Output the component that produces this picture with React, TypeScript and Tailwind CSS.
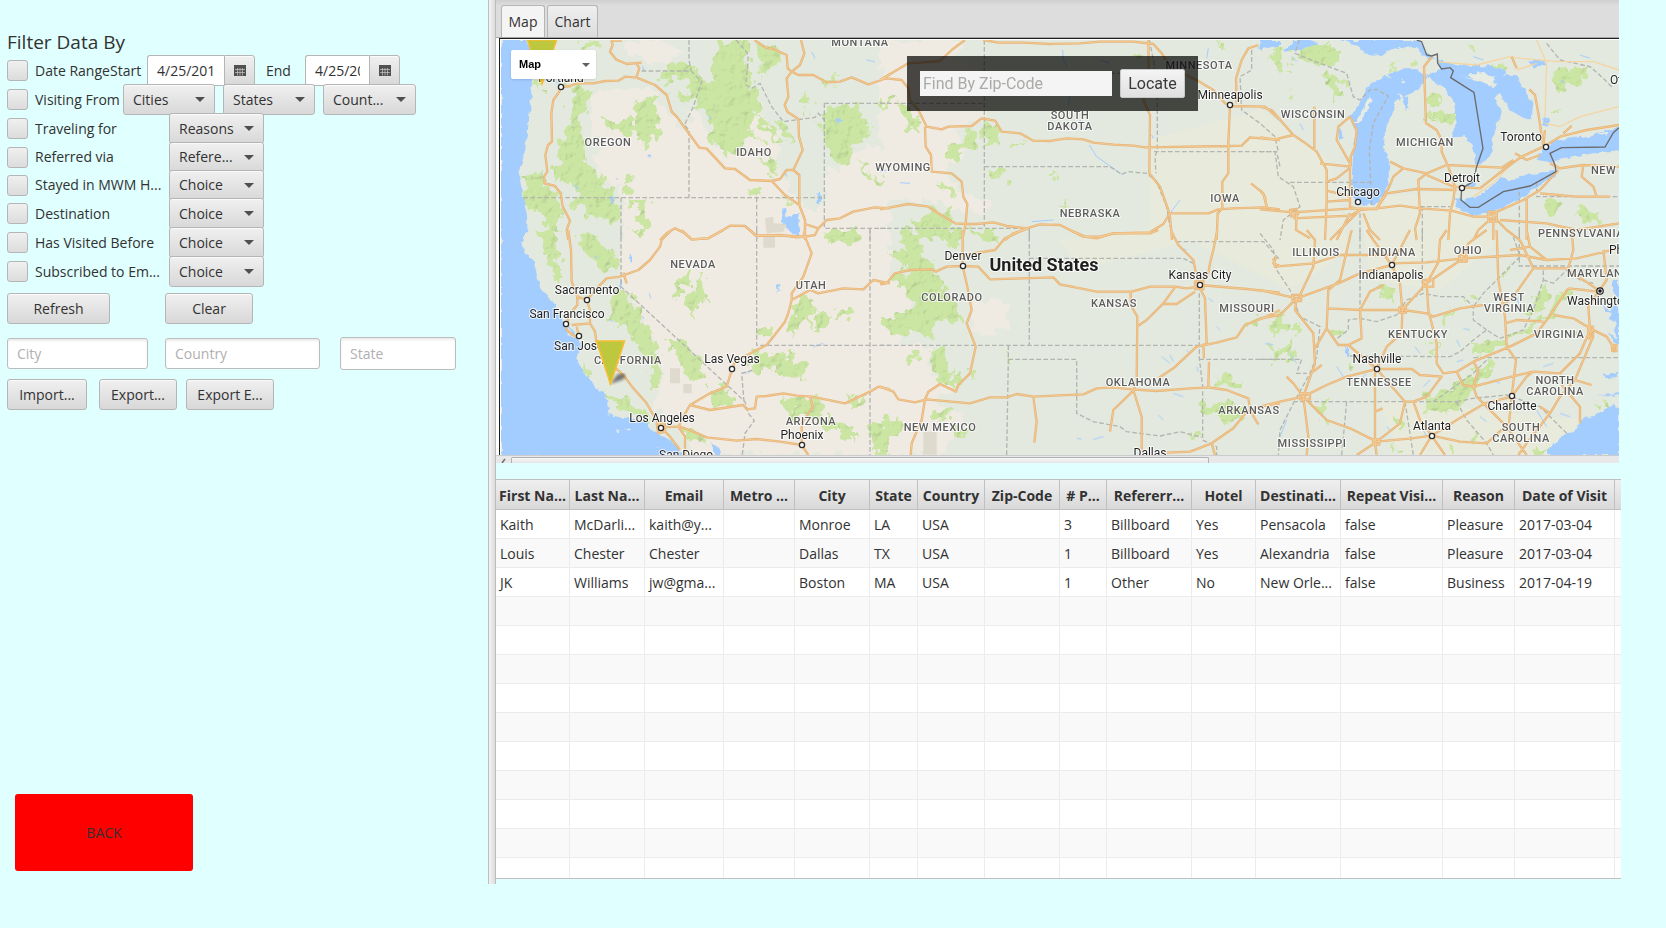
import type { ReactNode } from "react";

type Tile = {
  x: number;
  y: number;
  dry: string;
  forest: string;
  tan: string;
  water: string;
  isle: string;
  rivers: string;
  borders: string;
  roads: string;
  minor: string;
  frontier: string;
};

/* Each tile's geometry is drawn on a grid of three units to the pixel. */
const TILES: Tile[] = [
  {
    x: 490,
    y: 0,
    dry: "M330 270 L480 262 L540 345 L600 400 L590 330 L640 350 L660 440 L760 460 L790 340 L870 390 L860 500 L940 640 L1010 600 L1003 500 L1040 510 L1090 450 L1130 430 L1200 460 V720 H400 L400 600 L385 560 L330 540 L310 480 L340 430 L300 380 L300 300Z M400 120 L500 120 L590 150 L520 190 L460 180 L400 160Z",
    forest:
      "M235 250 L270 255 L300 270 L290 340 L270 370 L290 420 L270 470 L310 500 L330 540 L360 560 L385 600 L385 670 L360 680 L345 650 L290 650 L270 620 L250 625 L260 570 L240 550 L195 550 L195 500 L215 450 L215 400 L240 370 L240 300Z M95 525 L160 520 L165 560 L210 585 L205 630 L215 690 L180 690 L150 650 L120 620 L100 580Z M340 360 L400 360 L440 370 L430 310 L500 290 L510 390 L480 430 L450 430 L430 395 L370 400 L350 390Z M510 250 L545 195 L600 190 L640 235 L660 340 L650 350 L620 300 L590 310 L550 280 L570 270 L600 285 L590 240 L560 225 L520 255Z M690 122 L770 122 L775 250 L810 255 L810 320 L790 350 L780 400 L800 410 L760 430 L715 475 L660 430 L655 350 L640 280 L620 240 L680 250 L670 180Z M800 130 L860 150 L870 170 L850 200 L820 230 L815 180Z M795 340 L820 350 L880 430 L865 430 L830 390Z M850 350 L900 400 L905 425 L870 390Z M800 400 L840 430 L830 440Z M815 470 L850 475 L858 520 L845 520Z M1005 310 L1120 315 L1120 350 L1145 380 L1130 420 L1095 430 L1060 495 L1010 480Z M970 370 L1003 380 L1003 395 L975 385Z M1110 480 L1165 540 L1150 545 L1120 520Z M930 310 L945 270 L970 320 L950 335Z M1000 240 L1040 220 L1020 270Z M775 565 L803 565 L803 590 L780 590Z M425 600 L475 600 L465 630 L480 690 L450 700 L440 640Z M410 530 L430 525 L430 560 L395 570Z M265 130 L330 120 L330 145 L270 150Z M130 240 L160 250 L150 275Z M1000 690 L1100 690 L1120 720 L1000 720Z M860 590 L900 600 L880 610Z",
    tan: "M825 655 L850 650 L850 670 L890 672 L880 695 L830 700Z",
    water:
      "M33 120 L110 120 L122 150 L126 240 L120 330 L112 400 L104 460 L86 515 L97 560 L100 600 L112 650 L112 690 L100 720 L33 720Z M875 625 L885 625 L890 655 L930 640 L925 670 L928 710 L910 705 L880 670Z M358 590 h12 v22 h-9Z M983 576 h7 v30 h-6Z M253 545 l14 24 l-10 -5Z M1040 350 l17 12 l-12 14Z M658 335 l5 25 l-7 -5Z M475 466 l12 3 l-10 6Z M458 190 l8 22 l-8 0Z M375 530 l8 2 l-4 10Z",
    isle: "",
    rivers: "M126 232 L170 240 L213 250 M1130 180 L1155 185 M965 155 L975 175 M150 520 L155 525 M885 510 L890 530",
    borders:
      "M597 120 L597 180 L603 212 M455 213 L603 213 L635 245 L610 320 L583 375 L597 390 V593 M100 593 H1003 M393 593 V720 M800 593 V720 M1003 310 V685 H1200 M1003 310 H1200 M738 120 L765 150 L775 165 L768 255 L785 265 L810 250 L845 320 L880 365 L975 352 L985 340 L1003 360 M1140 685 V720",
    roads:
      "M213 255 L208 275 L190 300 L184 340 L186 425 L174 435 L166 465 L172 515 L162 530 L164 550 L195 558 L212 580 L218 620 L240 662 L230 690 L235 720 M213 262 L240 258 L260 250 L310 250 L345 243 L385 242 L405 230 L440 233 L495 255 L530 285 L545 335 L560 350 L600 405 L628 443 L650 446 L705 505 L735 507 L780 540 L845 543 L885 585 L928 615 M395 122 L365 122 L368 135 L360 155 L378 178 L410 192 L455 188 M440 190 L448 205 L438 235 M793 120 L825 142 L850 147 L890 165 L893 205 L905 215 L890 235 L895 290 L884 315 L892 335 L925 357 L927 410 L938 450 L910 510 L928 525 L928 615 L945 660 L945 720 M845 543 L870 537 L890 510 L910 510 M933 120 L943 160 L930 195 L905 215 L925 225 L970 225 L1010 247 L1050 245 L1085 232 L1135 253 L1175 240 L1200 222 M510 720 L530 700 L555 685 L580 697 L605 718 L655 715 L690 695 L720 677 L765 678 L800 708 L870 705 L920 712 L945 710 L975 705 L985 685 L945 672 M985 685 L1010 660 L1050 655 L1090 635 L1155 622 L1200 625",
    minor: "",
    frontier: "",
  },
  {
    x: 880,
    y: 0,
    dry: "M0 120 H250 L220 170 L300 200 L310 360 L230 380 L260 440 L200 520 L250 590 L340 600 L300 650 L150 600 L0 600Z",
    forest:
      "M50 310 L80 320 L120 350 L115 395 L85 380Z M260 390 L290 395 L290 450 L250 450 L240 485 L200 480 L203 430 L255 430Z M310 365 L350 370 L362 440 L315 445Z M170 540 L215 560 L235 590 L215 595Z M90 665 L120 655 L145 620 L210 650 L210 680 L240 690 L235 720 L100 720 L115 690Z M315 690 L350 690 L355 720 L315 720Z M505 522 L530 525 L525 535 L510 532Z M400 430 L450 425 L395 455Z M765 160h18v20h-18Z M1185 150 l15 -8 v55 l-12 0Z M550 600 l25 5 l-15 8Z M0 305 L45 285 L30 310 L0 320Z M315 510 L390 515 L380 540 L350 530Z M1015 125 h20 v12 h-16Z",
    tan: "",
    water: "M1130 145 L1165 120 H1200 V135 L1160 145Z",
    isle: "",
    rivers:
      "M548 150 L550 180 L562 200 M550 235 L572 270 L565 315 M628 435 L650 470 L700 505 L725 523 M455 665 L520 660 M610 390 L600 360 M900 600 L870 640 M660 180 L690 190 M0 515 L20 510 M60 548 L90 550 M985 145 L980 175 M815 405 L820 415 M1020 180 L1030 190",
    borders:
      "M313 120 V685 M0 310 H313 M313 500 H690 L725 523 L745 515 L800 520 L830 545 L860 620 L870 680 M313 220 H825 M808 120 L822 190 L832 300 V450 L825 470 L828 520 M822 455 H1190 L1200 500 M0 685 H448 V720 M1115 150 V210 L1080 230 L1085 330 L1140 370 L1185 410 L1195 455",
    roads:
      "M0 240 L85 190 L130 187 L180 183 L215 150 L255 120 M0 238 L20 235 L65 240 L85 265 L90 300 L115 330 L140 380 L185 388 L205 380 L275 378 L305 355 L345 362 L365 395 L420 400 L460 422 L510 423 L560 415 L610 418 L640 428 L700 434 L760 437 L795 442 L1045 438 L1085 437 L1110 412 L1200 420 M135 380 L137 440 L153 465 L155 515 L215 520 L245 545 L250 590 L262 612 L257 670 L247 720 M310 120 L355 128 L430 128 L510 132 L600 130 L660 125 L760 125 L820 132 L845 160 L875 205 L950 240 L1000 270 L1035 310 L1050 318 M805 120 L807 250 L790 300 L810 345 L808 520 L840 560 L865 630 L870 650 L876 720 M0 628 L85 612 L145 620 L180 643 L225 670 L257 672 L290 672 L340 667 L380 678 L440 685 L480 673 L540 675 L610 710 L650 715 L700 700 L810 697 L850 672 L870 640 L985 640 L1015 628 L1060 625 L1150 622 L1200 628 M375 720 L400 700 L445 685 M1050 318 L1045 430 V520 L1027 545 V625 L1013 640 L1010 720 M1050 318 L1155 320 L1200 360 M1070 310 L1068 235 L1085 180 L1105 145 L1135 135 M1113 550 L1150 580 L1160 622",
    minor: "",
    frontier: "",
  },
  {
    x: 1260,
    y: 0,
    dry: "",
    forest:
      "M120 145 L225 140 L225 200 L180 185 L110 165Z M35 150 L75 145 L85 215 L60 215Z M190 210 L245 240 L245 295 L220 300Z M80 275h25v22h-25Z M390 180 h20v20h-20Z M500 280 L540 285 L545 315 L505 310Z M525 340 L585 335 L580 375 L530 365Z M875 205 L985 205 L980 240 L920 255 L900 280 L875 240Z M870 330 h25 l-8 15Z M490 340 l35 5 v20 l-30 -5Z M855 610 L895 595 L900 630 L870 645Z M945 615 L1000 640 L1035 675 L970 665Z M620 130 L645 135 L640 150Z M440 185 L475 190 L465 208Z M700 190 L730 195 L720 215Z",
    tan: "",
    water:
      "M0 120 H60 L40 135 L0 150Z M100 120 H150 L180 130 L110 150 L75 155Z M240 120 H478 L500 160 L525 178 L490 170 L475 145 L420 140 L360 165 L310 160 L290 135Z M268 355 L295 315 L315 270 L330 245 L360 240 L365 230 L400 235 L380 225 L430 208 L470 208 L500 235 L475 270 L430 290 L405 310 L395 350 L375 390 L372 440 L388 480 L385 550 L370 590 L340 615 L315 618 L285 600 L275 540 L280 450 L290 400Z M495 228 L545 205 L580 215 L600 230 L640 240 L700 262 L735 225 L770 225 L790 265 L820 310 L815 355 L790 355 L750 330 L720 280 L700 290 L725 340 L695 420 V460 L670 490 L650 498 L640 440 L610 405 L570 415 L590 370 L585 310 L560 270 L520 245Z M525 178 L600 195 L700 200 L740 210 L720 250 L600 230 L540 205Z M830 480 L850 440 L900 420 L1000 405 L1050 385 H1077 V450 L1000 460 L920 475 L870 485Z M582 590 L590 620 L640 648 L700 635 L790 590 L850 550 L895 520 L880 512 L800 525 L760 540 L720 535 L660 585 L610 600Z M620 550 L650 548 L645 565 L615 562Z M848 350 l20 5 l-5 25 l-18 -5Z M805 185 L850 180 L855 195 L820 200Z M233 390 l14 -5 v35 l-12 0Z M430 290 l14 0 l2 35 l-12 8Z",
    isle: "M618 226 L670 215 L705 235 L690 258 L650 240Z M285 372 L330 290 L335 300 L300 370Z M415 280 l12 5 l-8 10Z M1010 400 l40 -5 l-10 12Z M425 235 l8 8 l-8 8Z",
    rivers: "M40 340 L55 360 M95 170 L110 185 M640 170 L670 180 M900 240 L915 250 M960 165 L990 175 M120 370 L130 390",
    borders:
      "M0 455 H45 L55 530 L100 560 L120 620 L70 660 L60 720 M90 547 H335 M118 120 L105 160 L180 190 L260 220 L280 290 L300 300 L330 270 L350 268 L385 288 L340 370 L328 450 L335 615 M300 640 V720 M480 620 H570 M487 620 V720 M778 575 V720 M830 545 V590 H1077 M860 130 L900 180 L990 200 L1030 235 L1060 265",
    roads:
      "M0 320 L35 330 L100 405 L130 425 L170 455 L200 510 L200 610 L195 720 M0 412 L45 418 L100 405 M163 320 V450 M270 350 L235 380 L230 420 L270 490 V620 L300 630 M270 350 L290 390 L285 440 L272 470 V500 M180 490 L270 500 M200 545 L230 535 L268 505 M200 572 L270 590 M200 605 L270 600 M0 628 L100 637 L280 625 L350 627 L380 580 L470 567 L590 570 M0 570 L15 590 L20 620 M110 640 L108 690 L150 715 M100 655 L270 647 L300 630 L350 625 L420 617 L480 625 L575 632 L640 650 L690 650 M390 485 L430 505 L400 530 L388 560 L350 625 M430 505 L500 520 L560 495 L725 503 L760 480 M515 170 L492 200 L498 370 L530 390 L545 420 V455 L565 500 L585 560 L580 600 L570 640 L565 720 M500 520 L475 540 L480 640 L465 685 L470 720 M500 525 L580 560 L660 565 L730 510 L785 470 L850 440 M850 440 L855 390 M850 440 L835 340 L825 285 L808 268 M850 440 L900 410 L980 390 L1077 375 M910 400 L935 378 M765 460 L800 480 L840 465 M870 490 L900 505 L970 495 L1077 500 M895 510 L840 570 L790 600 L700 640 L680 650 M970 495 L965 530 L1000 560 L1010 590 M840 580 L950 590 L1050 590 M800 590 V720 M700 640 V720 M720 660 L860 670 L950 690 L1077 670 M700 650 L655 690 L640 720 M700 650 L740 690 L780 720 M300 630 L250 680 L210 720 M310 640 L330 690 L360 720 M270 640 L240 700 L230 720 M90 630 l20 -3 l5 15 l-22 8Z M685 635 h25 v30 h-25Z M755 170 L770 205",
    minor:
      "M530 185 L650 195 L750 170 L780 175 L900 185 L1000 185 L1077 210 M830 120 L860 190 L855 350 M855 370 L900 380 L960 350 L1077 320 M640 590 L700 550 L760 485 M770 210 L830 190",
    frontier:
      "M470 120 L485 125 L500 165 L515 168 L532 162 L533 190 L545 207 L570 203 L580 213 L572 233 L642 277 L669 445 L650 500 L640 545 L605 565 L603 600 L630 622 L655 622 L730 575 L810 558 L888 515 L885 495 L870 460 L905 443 L1035 441 L1060 398 L1077 383",
  },
  {
    x: 490,
    y: 230,
    dry: "M393 30 H1200 V675 H620 L560 590 L490 540 L500 480 L520 430 L440 230 L393 180Z",
    forest:
      "M140 0 L190 0 L200 60 L215 150 L190 150 L175 100Z M360 180 L400 185 L440 215 L450 270 L500 330 L505 380 L520 430 L490 480 L480 400 L440 350 L400 290 L370 270Z M530 325 L560 320 L640 390 L645 460 L600 450 L560 380Z M265 400 L300 420 L305 450 L285 430Z M355 480 L420 520 L470 540 L490 565 L460 575 L400 545 L365 520Z M595 125 L610 130 L570 210 L545 200 L560 160Z M630 140 L650 160 L650 215 L620 215 L610 250 L600 230 L580 215Z M660 500 L700 470 L740 500 L730 530 L680 525Z M265 30 L300 0 L340 50 L390 90 L380 120 L320 120 L290 80Z M790 370 L870 365 L950 395 L940 440 L880 440 L850 410 L800 430 L770 400Z M900 250 L940 200 L980 210 L940 270 L910 320 L895 290Z M990 250 L1020 240 L1010 290 L980 310Z M950 290 L960 230 L975 235 L965 300Z M1070 220 L1095 225 L1080 260 L1040 270 L1050 245Z M805 290 L850 300 L850 325 L810 315Z M870 510 L920 500 L1000 510 L1000 550 L1040 580 L1100 600 L1090 640 L1040 600 L960 560 L900 560Z M1140 580 L1200 590 V675 H1145Z M570 590 L620 600 L640 630 L600 625Z M995 5 L1090 0 L1110 35 L1020 35Z M1060 520 L1130 480 L1120 510 L1080 525Z M415 0 h60 l-30 12Z",
    tan: "M820 15 h35 v38 h-35Z M540 415 h30 v45 h-30Z M580 462 h25 v28 h-25Z",
    water:
      "M33 0 L110 0 L95 45 L105 70 L130 90 L150 170 L185 215 L215 260 L235 310 L262 325 L275 345 L262 385 L275 425 L310 460 L350 500 L355 550 L400 562 L470 575 L495 605 L530 625 L560 645 L575 680 L33 680Z M388 150 l8 0 v30 l-8 -10Z M415 65 l12 25 l-8 5Z M858 165 l12 0 l-8 25Z M662 640 l20 10 l12 22 l-15 0Z M228 275 L245 300 L262 315 L250 312 L236 298Z M453 258 l12 0 l-4 6Z M900 0 h28 l-6 20Z M310 75 l8 12 l-8 -4Z",
    isle: "M378 598 l18 4 l-14 4Z M405 596 l18 -2 l-10 8Z M500 645 l6 8 l-4 0Z",
    rivers: "M478 190 L482 205 M970 350 L1000 340 M360 270 L370 275 M760 430 L780 425",
    borders: "M393 0 V170 L765 515 L775 550 L793 572 L765 610 L757 675 M800 0 V346 H1200 M1140 0 V675 M762 515 L755 430 L790 420",
    roads:
      "M235 0 L243 60 L245 155 L262 200 L290 210 M262 195 V225 L245 245 L228 282 M290 210 L300 240 V280 L245 285 M228 285 L230 300 L255 320 L267 318 L260 290 M300 280 L315 305 L320 340 L360 400 L400 435 L430 475 L470 520 L490 555 L513 590 M290 210 L325 170 L350 145 L390 140 L445 120 L480 90 L510 50 L515 30 L545 0 M400 128 L410 160 M575 0 L605 28 L655 25 L700 0 M780 0 L797 17 L890 17 L940 20 L945 0 M945 20 L965 70 L940 140 L905 190 V210 L895 250 L885 275 L850 320 L830 345 L790 365 L735 395 L726 418 L710 470 L660 490 L600 525 L580 560 L565 590 M905 210 L960 180 L985 190 L1060 175 L1120 178 L1150 150 L1200 160 M600 525 L660 540 L760 525 L770 538 L795 535 L800 500 L830 498 L880 490 L920 497 L965 500 L1065 520 L1140 485 L1165 470 L1200 478 M513 592 L570 590 L610 605 L650 622 L740 632 L800 627 L870 635 L935 645 L955 675 M513 592 L540 620 L570 660 M565 590 L585 620 V675 M960 500 L968 530 L935 580 V640 M500 580 h25 v25 l-20 5Z",
    minor: "",
    frontier: "",
  },
  {
    x: 880,
    y: 230,
    dry: "M0 150 L90 160 L100 300 L60 345 L160 350 L150 430 L230 480 L160 520 L250 560 L200 675 H0Z M270 220 L380 205 L390 280 L330 320 L280 300Z",
    forest:
      "M60 0 L110 10 L130 60 L100 80 L70 50Z M20 60 L110 70 L170 110 L200 190 L240 240 V285 L200 260 L160 290 L150 330 L100 300 L60 320 L0 290 V260 L80 250 L90 190 L20 150 L90 120Z M160 360 L200 350 V400 L230 420 L225 480 L180 460 L150 420 V390Z M0 570 L60 560 V610 L0 650Z M160 535 L220 540 L210 580 L165 560Z M215 585 L270 600 L250 625 L215 610Z M1000 440 L1080 445 V470 L1010 465Z M950 520 L1060 520 L1100 560 L1040 575 L960 540Z M1105 270 L1140 260 L1135 300 L1110 300Z M1175 280 h25 v30 h-20Z M370 380 l12 0 v25 l-10 0Z M200 0 H235 V50 L200 40Z M275 0 H315 V25 L280 20Z M935 600 L965 600 V620 L940 615Z M270 420 L290 415 L275 440Z M70 380 L110 360 L120 385 L80 400Z",
    tan: "M130 605 h40 v70 h-40Z",
    water: "",
    isle: "",
    rivers:
      "M845 380 L870 400 M880 490 L910 500 M1010 290 L1020 300 M590 625 L605 628 M900 55 L920 60 M640 628 L670 620 M870 375 L880 395 M950 410 L955 425 M985 205 L1000 215 M1155 340 L1180 345 M835 555 L850 570 M920 360 L930 370",
    borders:
      "M448 0 V346 M448 85 H910 L940 100 M0 346 H958 M958 190 V385 L968 470 V630 L1010 650 V675 M385 346 V388 H590 V550 L640 575 L720 590 L740 605 L840 618 L900 605 L965 622 M385 388 L380 675 M958 388 H1200 M890 35 H1150 L1200 90",
    roads:
      "M248 0 V108 L262 170 L275 240 L260 280 L287 350 L270 430 L235 465 L228 485 L180 462 L145 485 L135 508 L125 570 L95 640 L92 675 M0 163 L20 160 L45 130 L90 120 L155 118 L168 125 L200 110 L248 108 L295 110 L330 148 L520 142 L540 163 L650 185 L755 185 L810 170 L885 170 L920 175 L955 170 M248 80 L270 72 L345 60 L375 25 L430 0 M570 0 L615 20 H660 L700 10 H810 L835 0 M752 185 V225 L772 260 L770 460 L760 480 L785 560 V660 M770 290 L800 270 L850 220 L885 172 M850 222 L890 222 L945 185 M872 0 L895 45 L940 90 L955 165 L975 205 L980 340 L970 345 L972 385 M1012 0 L1000 60 L990 100 L985 130 L958 165 M958 165 L1100 177 L1200 188 M835 445 L880 415 L950 350 L1010 338 L1070 322 L1095 285 L1160 260 L1200 240 M0 470 L40 485 L55 508 L105 517 L140 508 L270 520 L330 502 H380 L410 492 L460 500 L610 493 L650 475 L700 472 L755 478 L830 483 L930 475 L985 472 L1040 480 L1105 505 L1112 545 L1135 583 M1200 520 L1140 530 L1100 545 L1060 595 L995 640 L930 665 L860 668 M995 640 L1005 675 M460 500 L470 575 L463 638 M760 482 L700 540 L690 605 M987 395 L985 475 M945 155 h25 v22 h-25Z M1190 80 l-10 20 l20 8",
    minor: "",
    frontier: "",
  },
  {
    x: 1260,
    y: 230,
    dry: "",
    forest:
      "M35 265 L70 260 L80 310 L45 310Z M80 290 L125 280 L115 320Z M30 345 L70 355 L110 330 L100 370 L50 395 L30 370Z M355 170 L395 165 L400 210 L360 200Z M195 290 L255 290 L250 315 L220 325Z M165 520 L195 515 V570 L170 560Z M495 500 L560 480 L640 430 L690 395 L705 430 L650 470 L620 510 L580 550 L500 540Z M490 370 L530 330 L520 380Z M540 270 L585 235 L560 290Z M620 345 L750 320 L860 250 L900 180 L935 190 L890 240 L820 300 L740 345 L640 375Z M800 250 L850 160 L870 190 L830 260Z M620 200 L655 190 V210 L625 215Z M725 120 L750 105 L745 130 L725 140Z M640 600 L665 620 L640 630Z M1005 515 L1045 520 L1020 540Z M820 650 L865 660 L845 675 L820 672Z M390 650 l25 0 l-10 20Z M265 395 l10 -5 v35 l-8 5Z M410 565 l20 0 v30 l-18 0Z M565 650 l15 0 v20 l-15 0Z M935 300 l20 10 l-10 10Z",
    tan: "",
    water:
      "M860 675 L880 640 L920 610 L950 605 L960 575 L1000 555 L1050 535 L1062 520 L1077 540 V675Z M1077 150 L1062 150 L1055 180 L1068 200 L1077 210Z M1055 225 L1077 235 V340 L1062 300 L1072 280 L1050 265Z M1035 235 L1060 245 L1060 252 L1040 245Z M1040 305 L1077 330 V350 L1060 330Z M1030 435 L1077 425 V435 L1050 450Z M1010 495 L1077 490 V497Z M258 350 l8 5 l-2 30 l-6 -10Z",
    isle: "",
    rivers:
      "M90 370 L110 400 M255 345 L265 380 M610 295 L630 300 M590 330 L600 350 M490 600 L500 620 M230 410 L250 440 M900 550 L930 560 M850 410 L880 400 M465 350 L480 370 M1010 200 L1040 240 M590 395 L610 390 M490 470 L510 450 M700 450 L720 460 M660 560 L680 575 M700 610 L720 625 M80 570 L60 620 M380 590 L390 600 M300 450 L320 430 M830 540 L860 590 M770 200 L780 230",
    borders:
      "M0 388 H125 L110 430 L140 430 M270 378 L570 380 L600 365 L640 330 L680 300 L720 325 L790 300 L820 240 L850 150 V115 M640 383 H1077 M100 515 H590 M520 515 L640 430 L680 390 M260 515 L245 675 M435 515 L460 675 M300 0 V170 L300 265 L265 270 L265 300 L225 330 M300 265 L350 275 L410 255 L440 210 L490 190 L540 200 L610 200 L640 230 V270 L680 300 M778 0 V108 H1077 M487 0 V190 M760 20 L780 80 L720 140 L670 190 L640 230 M590 515 L620 570 L680 640 L700 675 M590 515 L640 505 L740 495 L840 530 L920 610 M0 10 L40 60 L50 120 L90 180 L120 260 L180 290 L170 380 L150 430 L100 520 L60 600 L55 675 M850 150 L880 160 L920 120 L960 150 L1000 160",
    roads:
      "M350 417 L345 430 V640 L350 675 M350 417 L265 345 L235 345 L200 295 L165 355 M0 180 L110 205 L235 160 L300 130 L395 105 M110 205 L60 255 L0 265 M110 205 L105 240 L160 310 L165 400 L130 500 L145 620 L140 675 M200 295 L205 180 L240 150 L270 20 L275 0 M205 235 L300 240 H430 L500 250 L520 260 L600 235 L670 225 M140 0 L165 30 L160 110 L120 195 M40 85 L45 110 L160 100 L240 75 H395 M395 105 L340 30 L320 0 M395 105 L450 0 M395 105 L420 160 L427 240 L425 310 L380 350 L350 417 M395 100 L500 97 L610 85 L780 75 L860 90 L950 85 L1077 55 M500 160 L535 97 L540 30 L560 0 M610 85 L500 160 L427 240 M500 160 L505 240 L530 340 V400 L550 430 L590 425 L640 395 L750 350 L830 310 L860 270 L925 175 M610 85 L625 40 L680 0 M710 0 L715 150 L735 260 L740 350 L768 390 L755 500 M735 280 L770 270 L850 275 M800 0 L810 50 L750 60 M810 50 L860 90 M780 30 L820 115 H925 M820 115 L760 200 L725 230 M925 115 L940 60 L935 0 M925 120 L1018 182 M1018 182 L985 230 L990 300 L960 370 L900 430 L820 425 L755 440 L640 470 M925 175 L1015 185 M880 255 L940 265 L990 295 L1040 320 L1065 360 M990 300 L995 330 L945 450 L900 500 L870 550 L840 530 M945 450 L995 465 M905 465 L960 530 V580 M755 500 L800 440 L820 425 M755 500 L675 520 L590 570 L515 617 M590 425 L610 465 L640 470 L650 500 L680 530 L740 590 L800 675 M640 395 L655 420 L640 470 M350 417 H455 L480 435 L545 440 L500 500 L460 515 H435 L350 417 M435 515 L420 580 L350 635 M460 515 L480 570 L515 617 M515 617 L455 625 L350 635 L270 595 L200 570 L150 520 L130 500 M515 617 L600 635 L680 640 L735 590 M515 617 L480 675 M515 617 L555 675 M350 417 L260 440 L200 465 L130 500 L60 515 L0 530 M130 500 L100 460 L80 440 M350 635 L290 675 M160 425 L185 405 M265 345 L305 325 L300 240 L330 185 L370 165 M755 500 L745 600 M870 550 L800 640 L775 675 M1018 182 L1040 150 L1030 60 M98 195 h25 v18 h-25Z M490 150 h30 v20 h-30Z M598 75 h22 v20 h-22Z M418 232 h20 v16 h-20Z M120 490 h30 v18 h-30Z M340 628 h18 v16 h-18Z M985 290 h14 v35 h-14Z M1055 345 h14 v18 h-12Z M345 545 L368 535",
    minor: "",
    frontier: "",
  },
];

/* Fields the tiles share, painted layer by layer so no seam shows. */
function Layer({ pick, className, filter }: { pick: keyof Omit<Tile, "x" | "y">; className: string; filter?: string }) {
  return (
    <g className={className} filter={filter}>
      {TILES.map((t) => (
        <path key={`${t.x}-${t.y}`} transform={`translate(${t.x} ${t.y}) scale(0.33333)`} d={t[pick]} />
      ))}
    </g>
  );
}

type Label = [text: string, x: number, y: number, anchor?: "start"];

const STATES: Label[] = [
  ["MONTANA", 860, 46], ["OREGON", 608, 146], ["IDAHO", 754, 156], ["WYOMING", 903, 171],
  ["SOUTH", 1070, 119], ["DAKOTA", 1070, 130], ["MINNESOTA", 1199, 69], ["NEBRASKA", 1090, 217],
  ["IOWA", 1225, 202], ["WISCONSIN", 1313, 118], ["MICHIGAN", 1425, 146], ["NEW", 1591, 174, "start"],
  ["PENNSYLVANIA", 1538, 237, "start"], ["NEVADA", 693, 268], ["UTAH", 811, 289], ["CALIFORNIA", 628, 364],
  ["ARIZONA", 811, 425], ["COLORADO", 952, 301], ["KANSAS", 1114, 307], ["MISSOURI", 1247, 312],
  ["OKLAHOMA", 1138, 386], ["ARKANSAS", 1249, 414], ["NEW MEXICO", 940, 431], ["ILLINOIS", 1316, 256],
  ["INDIANA", 1392, 256], ["OHIO", 1468, 254], ["MARYLAND", 1567, 277, "start"], ["WEST", 1509, 301],
  ["VIRGINIA", 1509, 312], ["KENTUCKY", 1418, 338], ["VIRGINIA", 1559, 338], ["TENNESSEE", 1379, 386],
  ["NORTH", 1555, 384], ["CAROLINA", 1555, 395], ["SOUTH", 1521, 431], ["CAROLINA", 1521, 442],
  ["MISSISSIPPI", 1312, 447],
];

const CITIES: Label[] = [
  ["Portland", 561, 82], ["Minneapolis", 1230, 99], ["Chicago", 1358, 196], ["Detroit", 1462, 182],
  ["Toronto", 1521, 141], ["Ottawa", 1610, 84, "start"], ["Sacramento", 587, 294], ["San Francisco", 567, 318],
  ["San Jose", 554, 350, "start"], ["Las Vegas", 732, 363], ["Los Angeles", 662, 422], ["San Diego", 686, 459],
  ["Phoenix", 802, 439], ["Denver", 963, 260], ["Kansas City", 1200, 279], ["Dallas", 1150, 457],
  ["Indianapolis", 1391, 279], ["Nashville", 1377, 363], ["Atlanta", 1432, 430], ["Charlotte", 1512, 410],
  ["Washington", 1567, 305, "start"], ["Philadelphia", 1609, 254, "start"],
];

const DOTS = [
  [561, 87], [1230, 105], [1358, 202], [1462, 188], [1546, 147], [587, 300], [566, 324], [579, 336], [732, 369],
  [661, 428], [802, 445], [963, 266], [1200, 285], [1392, 265], [1377, 369], [1432, 436], [1512, 396],
];

function Labels({ items, className }: { items: Label[]; className: string }) {
  return (
    <g className={className} stroke="#ffffff" strokeOpacity="0.75" strokeWidth="2" paintOrder="stroke">
      {items.map(([text, x, y, anchor]) => (
        <text key={`${text}-${x}-${y}`} x={x} y={y} textAnchor={anchor ?? "middle"}>
          {text}
        </text>
      ))}
    </g>
  );
}

function MapDrawing() {
  return (
    <svg
      viewBox="501 40 1118 415"
      preserveAspectRatio="xMinYMin slice"
      className="block h-full w-full bg-[#e3e9de]"
      role="img"
      aria-label="Map of the United States"
    >
      <defs>
        <filter id="ragged" x="0" y="0" width="100%" height="100%" colorInterpolationFilters="sRGB">
          <feTurbulence type="fractalNoise" baseFrequency="0.09" numOctaves="3" seed="4" />
          <feDisplacementMap in="SourceGraphic" scale="18" xChannelSelector="R" yChannelSelector="G" />
        </filter>
        <filter id="hills" x="0" y="0" width="100%" height="100%" colorInterpolationFilters="sRGB">
          <feTurbulence type="fractalNoise" baseFrequency="0.09" numOctaves="3" seed="9" result="noise" />
          <feDisplacementMap in="SourceGraphic" in2="noise" scale="22" xChannelSelector="R" yChannelSelector="G" result="shape" />
          <feDiffuseLighting in="noise" surfaceScale="1" diffuseConstant="1.12" lightingColor="#ffffff" result="light">
            <feDistantLight azimuth="225" elevation="65" />
          </feDiffuseLighting>
          <feComposite in="light" in2="shape" operator="arithmetic" k1="1" />
        </filter>
        <filter id="shore" x="0" y="0" width="100%" height="100%" colorInterpolationFilters="sRGB">
          <feTurbulence type="fractalNoise" baseFrequency="0.15" numOctaves="2" seed="2" />
          <feDisplacementMap in="SourceGraphic" scale="6" xChannelSelector="R" yChannelSelector="G" />
        </filter>
        <filter id="soft">
          <feGaussianBlur stdDeviation="1.5" />
        </filter>
      </defs>
      <path d="M1150 140 L1260 110 L1330 160 L1350 250 L1290 290 L1190 240 L1080 270 L1060 240 L1150 230Z M1360 200 L1450 190 L1500 240 L1440 290 L1370 280Z M1380 400 L1580 420 L1560 455 H1400Z" fill="#e8ebdc" />
      <Layer pick="dry" className="fill-[#efeae2]" filter="url(#ragged)" />
      <Layer pick="tan" className="fill-[#dedacd]" />
      <Layer pick="forest" className="fill-[#cbe6a3]" filter="url(#hills)" />
      <Layer pick="water" className="fill-[#a3ccff]" filter="url(#shore)" />
      <Layer pick="isle" className="fill-[#e8ece3]" filter="url(#shore)" />
      <Layer pick="rivers" className="fill-none stroke-[#a3ccff] stroke-[3]" />
      <g strokeDasharray="14 7">
        <Layer pick="borders" className="fill-none stroke-[#b3b5b0] stroke-[4]" />
      </g>
      <Layer pick="minor" className="fill-none stroke-[#f3d6a3] stroke-[4]" />
      <g strokeLinejoin="round">
        <Layer pick="roads" className="fill-none stroke-[#e6b376] stroke-[7]" />
        <Layer pick="roads" className="fill-none stroke-[#f9d5a0] stroke-[2]" />
      </g>
      <Layer pick="frontier" className="fill-none stroke-[#6b6b6b] stroke-[4]" />
      <Labels items={STATES} className="fill-[#5c5c5c] font-[Roboto,sans-serif] text-[11px] font-medium tracking-wider" />
      <Labels items={CITIES} className="fill-[#1f1f1f] font-[Roboto,sans-serif] text-[12px]" />
      <Labels items={[["United States", 1044, 271]]} className="fill-[#1f1f1f] font-[Roboto,sans-serif] text-[18px] font-bold" />
      {DOTS.map(([x, y]) => (
        <circle key={`${x}-${y}`} cx={x} cy={y} r="2.6" fill="#ffffff" stroke="#2a2a2a" strokeWidth="1.3" />
      ))}
      <circle cx="1600" cy="291" r="3.2" fill="#ffffff" stroke="#1a1a1a" strokeWidth="1.2" />
      <circle cx="1600" cy="291" r="1.8" fill="#111111" />
      <path d="M610 384 L618 374 L625 374 L624 379Z" fill="#000000" fillOpacity="0.5" filter="url(#soft)" />
      <g fill="#bec83f" stroke="#f7bd33" strokeWidth="1.6">
        <path d="M596.500 341 H624.500 L610.500 384Z" />
        <path d="M527.500 40 H556.500 L542 84Z" />
      </g>
    </svg>
  );
}

const raised =
  "rounded-[3px] border border-[#b5b5b5] bg-linear-to-b from-[#f0f0f0] to-[#d8d8d8] shadow-[inset_0_1px_0_#fafafa] text-[#323232]";

function Arrow() {
  return (
    <svg viewBox="0 0 10 5" className="pointer-events-none absolute top-[13px] right-[10px] h-[5px] w-[10px]" aria-hidden="true">
      <path d="M0 0H10L5 5Z" fill="#4f4f4f" />
    </svg>
  );
}

function Drop({ label, text, className }: { label: string; text: string; className: string }) {
  return (
    <div className={`relative h-[31px] shrink-0 ${className}`}>
      <select aria-label={label} className={`h-full w-full appearance-none pl-[9px] text-sm ${raised}`}>
        <option>{text}</option>
      </select>
      <Arrow />
    </div>
  );
}

function CalendarIcon() {
  return (
    <svg viewBox="0 0 12 11" className="h-[11px] w-3" aria-hidden="true">
      <path d="M0 0H12V11H0Z" fill="#505050" />
      <path d="M1 4.500H11M1 7.500H11M3.500 3V10.500M6 3V10.500M8.500 3V10.500" stroke="#c8c8c8" strokeWidth="0.7" />
    </svg>
  );
}

function DateField({ label, value, className }: { label: string; value: string; className: string }) {
  return (
    <div className={`flex h-[31px] shrink-0 ${className}`}>
      <input
        aria-label={label}
        defaultValue={value}
        className="w-0 grow rounded-l-[3px] border border-r-0 border-[#b5b5b5] bg-white px-[9px] text-sm text-[#323232]"
      />
      <button aria-label={`Choose ${label}`} className={`flex w-[31px] items-center justify-center rounded-l-none ${raised}`}>
        <CalendarIcon />
      </button>
    </div>
  );
}

function FilterRow({ id, label, labelWidth, height, children }: { id: string; label: string; labelWidth: string; height: string; children: ReactNode }) {
  return (
    <div className={`flex items-center ${height}`}>
      <input
        id={id}
        type="checkbox"
        className="h-[21px] w-[21px] shrink-0 appearance-none rounded-[3px] border border-[#b5b5b5] bg-linear-to-b from-[#f0f0f0] to-[#dcdcdc]"
      />
      <label htmlFor={id} className={`shrink-0 pl-[7px] whitespace-nowrap ${labelWidth}`}>
        {label}
      </label>
      {children}
    </div>
  );
}

const CHOICES = [
  { id: "traveling", label: "Traveling for", text: "Reasons", height: "h-[29px]" },
  { id: "referred", label: "Referred via", text: "Refere...", height: "h-7" },
  { id: "stayed", label: "Stayed in MWM H...", text: "Choice", height: "h-7" },
  { id: "destination", label: "Destination", text: "Choice", height: "h-[29px]" },
  { id: "visited", label: "Has Visited Before", text: "Choice", height: "h-[29px]" },
  { id: "subscribed", label: "Subscribed to Em...", text: "Choice", height: "h-[29px]" },
];

const field =
  "rounded-[3px] border border-[#bcbcbc] bg-white px-[9px] text-sm text-[#323232] shadow-[inset_0_2px_2px_#ececec] placeholder:text-[#b0b0b0]";

function FilterPanel() {
  return (
    <aside className="flex w-[488px] shrink-0 flex-col pt-7 pl-[7px] text-sm text-[#323232]">
      <h1 className="text-[19px] leading-7">Filter Data By</h1>
      <FilterRow id="dates" label="Date Range" labelWidth="w-[82px]" height="h-[29px]">
        <span className="w-[37px]">Start</span>
        <DateField label="start date" value="4/25/2017" className="w-[108px]" />
        <span className="w-[50px] pl-[11px]">End</span>
        <DateField label="end date" value="4/25/2017" className="w-[95px]" />
      </FilterRow>
      <FilterRow id="from" label="Visiting From" labelWidth="w-[95px]" height="h-[29px]">
        <div className="flex gap-2">
          <Drop label="Cities" text="Cities" className="w-[92px]" />
          <Drop label="States" text="States" className="w-[92px]" />
          <Drop label="Countries" text="Count..." className="w-[93px]" />
        </div>
      </FilterRow>
      {CHOICES.map((c) => (
        <FilterRow key={c.id} id={c.id} label={c.label} labelWidth="w-[141px]" height={c.height}>
          <Drop label={c.label} text={c.text} className="w-[95px]" />
        </FilterRow>
      ))}
      <div className="mt-[7px] flex gap-[55px]">
        <button className={`h-[31px] w-[103px] ${raised}`}>Refresh</button>
        <button className={`h-[31px] w-[88px] ${raised}`}>Clear</button>
      </div>
      <div className="mt-[13px] flex items-center">
        <input aria-label="City" placeholder="City" className={`h-[31px] w-[141px] ${field}`} />
        <input aria-label="Country" placeholder="Country" className={`ml-[17px] h-[31px] w-[155px] ${field}`} />
        <input aria-label="State" placeholder="State" className={`ml-5 h-[33px] w-[116px] ${field}`} />
      </div>
      <div className="mt-[9px] flex">
        <button className={`h-[31px] w-20 ${raised}`}>Import...</button>
        <button className={`ml-3 h-[31px] w-[78px] ${raised}`}>Export...</button>
        <button className={`ml-[9px] h-[31px] w-[88px] ${raised}`}>Export E...</button>
      </div>
      <button className="mt-auto mb-[13px] ml-2 h-[77px] w-[178px] rounded-[3px] bg-[#ff0000]">BACK</button>
    </aside>
  );
}

function MapPane() {
  return (
    <section className="mr-0.5">
      <div className="flex h-[38px] items-end gap-0.5 border-b border-[#a8a8a8] bg-linear-to-b from-[#cfcfcf] via-[#dddddd] via-15% to-[#dddddd] pl-[5px] text-sm text-[#323232]" role="tablist">
        <button role="tab" aria-selected="true" className="h-8 w-11 rounded-t-[3px] border border-b-0 border-[#b5b5b5] bg-[#f4f4f4]">
          Map
        </button>
        <button role="tab" aria-selected="false" className="h-8 w-[51px] rounded-t-[3px] border border-b-0 border-[#b5b5b5] bg-linear-to-b from-[#efefef] to-[#dcdcdc]">
          Chart
        </button>
      </div>
      <div className="bg-white pl-[3px]">
        <div className="relative h-[417px] overflow-hidden border-t border-l border-[#1e1e1e] bg-white pt-px pl-px">
          <MapDrawing />
          <button className="absolute top-[11px] left-[11px] flex h-[29px] w-[85px] items-center justify-between rounded-[2px] bg-white pr-[6px] pl-2 font-['Liberation_Sans',sans-serif] text-[11px] font-bold text-black shadow-sm">
            Map
            <svg viewBox="0 0 8 4" className="h-1 w-2" aria-hidden="true">
              <path d="M0 0H8L4 4Z" fill="#606060" />
            </svg>
          </button>
          <form className="absolute top-[17px] left-[407px] flex h-[55px] items-center gap-2 bg-[#000000b3] px-[13px] font-[Roboto,sans-serif] text-base">
            <input
              aria-label="Zip code"
              placeholder="Find By Zip-Code"
              className="h-[25px] w-48 bg-[#fffffff0] px-[3px] text-[#333333] placeholder:text-[#a9aba6]"
            />
            <button type="button" className="h-[29px] w-[65px] rounded-[2px] border border-[#c8c8c8] bg-linear-to-b from-[#f4f4f4] to-[#e0e0e0] text-[#383838]">
              Locate
            </button>
          </form>
        </div>
      </div>
      <div className="flex h-2 items-end overflow-hidden border-t border-[#cccccc] bg-[#e8e8e8]">
        <svg viewBox="0 0 15 6" className="h-[6px] w-[15px]" aria-hidden="true">
          <path d="M9 2 L6 6" fill="none" stroke="#707070" strokeWidth="1.5" />
        </svg>
        <div className="h-[6px] w-[698px] rounded-t-[2px] border border-b-0 border-[#b0b0b0] bg-linear-to-b from-[#f6f6f6] to-[#e6e6e6]" />
      </div>
    </section>
  );
}

const COLUMNS: [title: string, width: string][] = [
  ["First Na...", "w-[74px]"], ["Last Na...", "w-[75px]"], ["Email", "w-[79px]"], ["Metro ...", "w-[71px]"],
  ["City", "w-[75px]"], ["State", "w-[48px]"], ["Country", "w-[67px]"], ["Zip-Code", "w-[75px]"],
  ["# P...", "w-[47px]"], ["Refererr...", "w-[85px]"], ["Hotel", "w-[64px]"], ["Destinati...", "w-[85px]"],
  ["Repeat Visi...", "w-[102px]"], ["Reason", "w-[72px]"], ["Date of Visit", "w-[100px]"], ["", ""],
];

const ROWS: string[][] = [
  ["Kaith", "McDarli...", "kaith@y...", "", "Monroe", "LA", "USA", "", "3", "Billboard", "Yes", "Pensacola", "false", "Pleasure", "2017-03-04"],
  ["Louis", "Chester", "Chester", "", "Dallas", "TX", "USA", "", "1", "Billboard", "Yes", "Alexandria", "false", "Pleasure", "2017-03-04"],
  ["JK", "Williams", "jw@gma...", "", "Boston", "MA", "USA", "", "1", "Other", "No", "New Orle...", "false", "Business", "2017-04-19"],
  ...Array.from({ length: 10 }, () => [] as string[]),
];

function VisitTable() {
  return (
    <div className="mt-4 mb-[5px] h-[400px] overflow-hidden border-b border-[#c0c0c0] bg-white">
      <table className="w-full table-fixed border-separate border-spacing-0 text-sm text-[#323232]">
        <thead>
          <tr className="h-[31px] bg-linear-to-b from-[#f0f0f0] to-[#d8d8d8]">
            {COLUMNS.map(([title, width], i) => (
              <th key={i} className={`overflow-hidden border-y border-r border-[#c0c0c0] px-0 pt-0.5 pb-0 font-bold whitespace-nowrap last:border-r-0 ${width}`}>
                {title}
              </th>
            ))}
          </tr>
        </thead>
        <tbody>
          {ROWS.map((row, r) => (
            <tr key={r} className="h-[29px] even:bg-[#f9f9f9]">
              {COLUMNS.map((_, i) => (
                <td key={i} className="overflow-hidden border-r border-b border-[#ececec] pt-0.5 pr-0 pb-0 pl-1 whitespace-nowrap last:border-r-0">
                  {row[i]}
                </td>
              ))}
            </tr>
          ))}
        </tbody>
      </table>
    </div>
  );
}

export default function App() {
  return (
    <div className="min-h-screen bg-[#e0ffff] font-['Open_Sans','Noto_Sans',sans-serif]">
      <div className="flex pr-[45px]">
        <FilterPanel />
        <div className="w-2 shrink-0 border-x border-[#bdbdbd] bg-linear-to-r from-[#f4f4f4] to-[#dcdcdc]" />
        <main className="min-w-0 flex-1">
          <MapPane />
          <VisitTable />
        </main>
      </div>
    </div>
  );
}
